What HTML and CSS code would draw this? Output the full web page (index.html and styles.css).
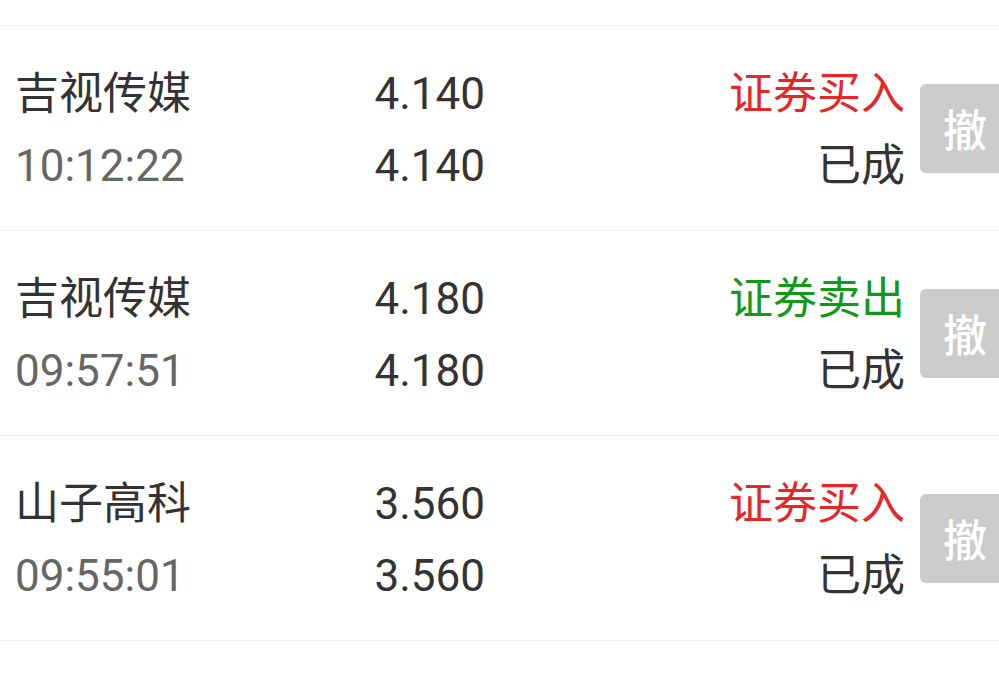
FILE: index.html
```html
<!DOCTYPE html>
<html lang="zh-CN">
<head>
    <meta charset="UTF-8">
    <meta name="viewport" content="width=device-width, initial-scale=1.0">
    <title>当日委托</title>
    <link rel="stylesheet" href="styles.css">
</head>
<body>
    <div class="order-list">
        <div class="order">
            <div class="col name">
                <div class="stock">吉视传媒</div>
                <div class="time">10:12:22</div>
            </div>
            <div class="col price">
                <div>4.140</div>
                <div>4.140</div>
            </div>
            <div class="col blank"></div>
            <div class="col status">
                <div class="buy">证券买入</div>
                <div>已成</div>
            </div>
            <button class="cancel">撤</button>
        </div>

        <div class="order">
            <div class="col name">
                <div class="stock">吉视传媒</div>
                <div class="time">09:57:51</div>
            </div>
            <div class="col price">
                <div>4.180</div>
                <div>4.180</div>
            </div>
            <div class="col blank"></div>
            <div class="col status">
                <div class="sell">证券卖出</div>
                <div>已成</div>
            </div>
            <button class="cancel">撤</button>
        </div>

        <div class="order">
            <div class="col name">
                <div class="stock">山子高科</div>
                <div class="time">09:55:01</div>
            </div>
            <div class="col price">
                <div>3.560</div>
                <div>3.560</div>
            </div>
            <div class="col blank"></div>
            <div class="col status">
                <div class="buy">证券买入</div>
                <div>已成</div>
            </div>
            <button class="cancel">撤</button>
        </div>
    </div>
</body>
</html>
```

FILE: styles.css
```css
:root {
    --text-color: #333;
    --muted-color: #666;
    --line-color: #eee;
    --buy-color: #e62727;
    --sell-color: #14981a;
    --button-color: #cbcbcb;
    --font-family: Roboto, "Noto Sans CJK SC", sans-serif;
}

body {
    margin: 0;
    background: #fff;
    color: var(--text-color);
    font-family: var(--font-family);
    overflow: hidden;
}

.order-list {
    padding-top: 25px;
}

.order {
    display: flex;
    align-items: center;
    height: 204px;
    padding-left: 15px;
    border-top: 1px solid var(--line-color);
    overflow: hidden;
}

.order:last-child {
    border-bottom: 1px solid var(--line-color);
}

.col {
    font-size: 44px;
    line-height: 72px;
    padding-top: 3px;
}

.name {
    width: 300px;
    flex: none;
}

.time {
    color: var(--muted-color);
}

.price {
    width: 170px;
    flex: none;
    text-align: right;
}

.blank {
    flex: 1;
}

.status {
    text-align: right;
}

.buy {
    color: var(--buy-color);
}

.sell {
    color: var(--sell-color);
}

.cancel {
    flex: none;
    width: 90px;
    height: 89px;
    margin-left: 15px;
    margin-right: -11px;
    border: none;
    border-radius: 6px;
    background: var(--button-color);
    color: #fff;
    font-family: var(--font-family);
    font-size: 44px;
    font-weight: 500;
    padding: 0;
}
```
